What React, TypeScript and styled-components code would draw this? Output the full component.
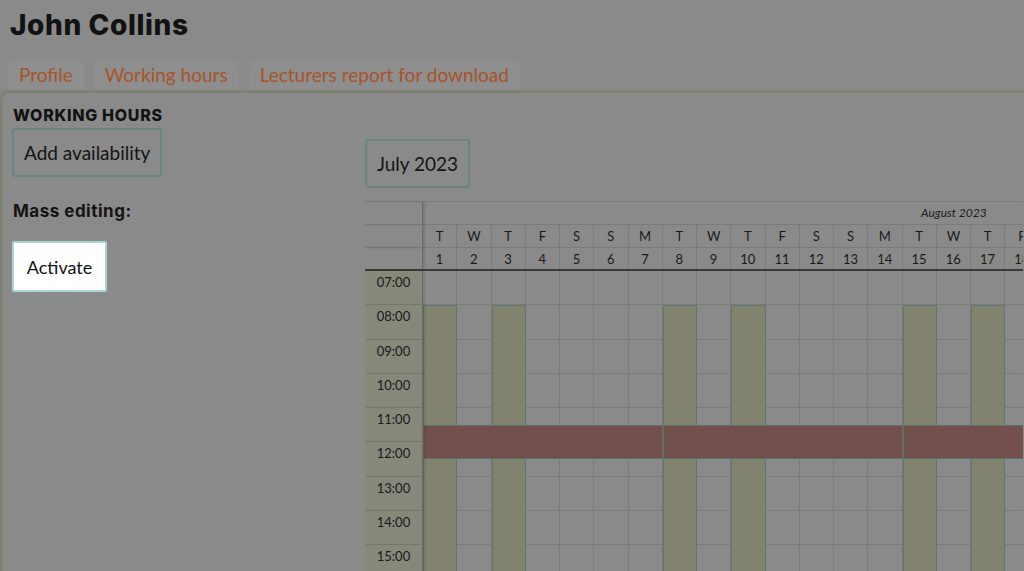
import styled, { createGlobalStyle } from "styled-components";

const HOURS = ["07:00", "08:00", "09:00", "10:00", "11:00", "12:00", "13:00", "14:00", "15:00", "16:00", "17:00"];
const LETTERS = ["M", "T", "W", "T", "F", "S", "S"];
const DAYS = Array.from({ length: 31 }, (_, i) => ({
  num: i + 1,
  letter: LETTERS[(i + 1) % 7],
}));
const AVAILABLE = [1, 3, 8, 10, 15, 17, 22, 24, 29, 31];
const BREAKS = [
  [1, 7],
  [8, 14],
  [15, 21],
  [22, 28],
  [29, 31],
];

export default function App() {
  return (
    <Page>
      <GlobalStyle />
      <Title>John Collins</Title>
      <Tabs>
        <Tab>Profile</Tab>
        <Tab>Working hours</Tab>
        <Tab>Lecturers report for download</Tab>
      </Tabs>
      <Panel>
        <Heading>WORKING HOURS</Heading>
        <Columns>
          <Sidebar>
            <OutlineButton>Add availability</OutlineButton>
            <Label>Mass editing:</Label>
            <ActivateButton>Activate</ActivateButton>
          </Sidebar>
          <Main>
            <OutlineButton>July 2023</OutlineButton>
            <Calendar>
              <HeadGrid>
                <TimeHead $row={1} />
                <TimeHead $row={2} />
                <TimeHead $row={3} />
                <MonthCell>August 2023</MonthCell>
                {DAYS.map((d) => (
                  <DayHead key={"l" + d.num} $row={2} $col={d.num + 1}>
                    {d.letter}
                  </DayHead>
                ))}
                {DAYS.map((d) => (
                  <DayHead key={"n" + d.num} $row={3} $col={d.num + 1}>
                    {d.num}
                  </DayHead>
                ))}
              </HeadGrid>
              <BodyGrid>
                {HOURS.map((h, i) => (
                  <TimeCell key={h} $row={i * 2 + 1}>
                    {h}
                  </TimeCell>
                ))}
                {HOURS.map((h, i) =>
                  DAYS.map((d) => (
                    <Cell key={h + d.num} $row={i * 2 + 1} $col={d.num + 1} />
                  ))
                )}
                {AVAILABLE.map((d) => (
                  <Available key={"a" + d} $col={d + 1} />
                ))}
                {BREAKS.map(([from, to]) => (
                  <Break key={"b" + from} $from={from + 1} $to={to + 2} />
                ))}
              </BodyGrid>
            </Calendar>
          </Main>
        </Columns>
      </Panel>
    </Page>
  );
}

const GlobalStyle = createGlobalStyle`
  html, body {
    margin: 0;
    background: #8a8a8a;
    overflow: hidden;
  }
  body {
    font-family: Lato, "DejaVu Sans", sans-serif;
    color: #141414;
  }
`;

const Page = styled.div`
  width: 1024px;
  height: 571px;
  overflow: hidden;
`;

const Title = styled.h1`
  margin: 0;
  padding: 8px 0 0 10px;
  font-family: Inter, "DejaVu Sans", sans-serif;
  font-weight: 800;
  font-size: 28px;
  letter-spacing: 0.6px;
  line-height: 34px;
  color: #121212;
`;

const Tabs = styled.div`
  display: flex;
  gap: 10px;
  margin-top: 18px;
  padding-left: 8px;
`;

const Tab = styled.div`
  height: 30px;
  padding: 0 11px;
  background: #8e8e8e;
  border-radius: 8px 8px 0 0;
  color: #a8532a;
  font-size: 19px;
  line-height: 30px;
`;

const Panel = styled.div`
  border-top: 3px solid #7f8272;
  border-left: 3px solid #7f8272;
  border-top-left-radius: 8px;
  padding: 13px 0 0 10px;
  height: 480px;
`;

const Heading = styled.h2`
  margin: 0 0 4px;
  font-family: Inter, "DejaVu Sans", sans-serif;
  font-weight: 800;
  font-size: 16px;
  letter-spacing: 0.7px;
  line-height: 18px;
  color: #121212;
`;

const Columns = styled.div`
  display: flex;
`;

const Sidebar = styled.div`
  width: 353px;
  flex-shrink: 0;
  display: flex;
  flex-direction: column;
  align-items: flex-start;
`;

const Main = styled.div`
  flex: 1;
  min-width: 0;
  padding-top: 11px;
  display: flex;
  flex-direction: column;
  align-items: flex-start;
  gap: 13px;
`;

const OutlineButton = styled.button`
  height: 49px;
  margin-left: -1px;
  padding: 0 10px;
  background: transparent;
  border: 2px solid #688580;
  border-radius: 3px;
  font-family: Lato, "DejaVu Sans", sans-serif;
  font-size: 19px;
  color: #141414;
`;

const Label = styled.div`
  margin: 24px 0 20px;
  font-family: Inter, "DejaVu Sans", sans-serif;
  font-weight: 700;
  font-size: 17px;
  letter-spacing: 0.5px;
  line-height: 20px;
  color: #141414;
`;

const ActivateButton = styled.button`
  height: 51px;
  width: 95px;
  margin-left: -1px;
  padding: 0;
  background: #ffffff;
  border: 2px solid #a9d6d0;
  border-radius: 2px;
  font-family: Lato, "DejaVu Sans", sans-serif;
  font-size: 18px;
  color: #111;
`;

const Calendar = styled.div`
  width: 100%;
  overflow: hidden;
  margin-left: -1px;
`;

const gridCols = `58px repeat(31, 34.25px)`;

const HeadGrid = styled.div`
  display: grid;
  grid-template-columns: ${gridCols};
  grid-template-rows: 23px 23px 21px;
  border-top: 1px solid #7b7b7b;
  border-bottom: 2px solid #3b3b3b;
`;

const TimeHead = styled.div<{ $row: number }>`
  grid-column: 1;
  grid-row: ${({ $row }) => $row};
  border-bottom: ${({ $row }) => ($row < 3 ? "1px solid #7b7b7b" : "none")};
  border-right: 1px solid #6c6c6c;
  box-shadow: 2px 0 2px rgba(0, 0, 0, 0.12);
  position: relative;
  z-index: 2;
`;

const MonthCell = styled.div`
  grid-column: 2 / span 31;
  grid-row: 1;
  border-bottom: 1px solid #7b7b7b;
  text-align: center;
  font-style: italic;
  font-size: 12px;
  line-height: 22px;
  color: #1c1c1c;
`;

const DayHead = styled.div<{ $row: number; $col: number }>`
  grid-column: ${({ $col }) => $col};
  grid-row: ${({ $row }) => $row};
  border-right: 1px solid #7b7b7b;
  border-bottom: ${({ $row }) => ($row < 3 ? "1px solid #7b7b7b" : "none")};
  display: flex;
  align-items: center;
  justify-content: center;
  font-size: 13px;
  color: #1a1a1a;
`;

const BodyGrid = styled.div`
  display: grid;
  grid-template-columns: ${gridCols};
  grid-template-rows: repeat(22, 17.125px);
`;

const TimeCell = styled.div<{ $row: number }>`
  grid-column: 1;
  grid-row: ${({ $row }) => $row} / span 2;
  background: #86887a;
  border-bottom: 1px solid #7a7c70;
  border-right: 1px solid #6c6c6c;
  box-shadow: 2px 0 2px rgba(0, 0, 0, 0.12);
  position: relative;
  z-index: 3;
  padding-top: 4px;
  text-align: center;
  font-size: 13px;
  line-height: 14px;
  color: #1a1a1a;
`;

const Cell = styled.div<{ $row: number; $col: number }>`
  grid-column: ${({ $col }) => $col};
  grid-row: ${({ $row }) => $row} / span 2;
  border-right: 1px solid #7b7b7b;
  border-bottom: 1px solid #7b7b7b;
`;

const Available = styled.div<{ $col: number }>`
  grid-column: ${({ $col }) => $col};
  grid-row: 3 / -1;
  background: #81836f;
  border: 1px solid #5f7773;
  position: relative;
  z-index: 1;
`;

const Break = styled.div<{ $from: number; $to: number }>`
  grid-column: ${({ $from }) => $from} / ${({ $to }) => $to};
  grid-row: 10 / span 2;
  background: #734f4e;
  border: 1px solid #5d716c;
  position: relative;
  z-index: 2;
`;
